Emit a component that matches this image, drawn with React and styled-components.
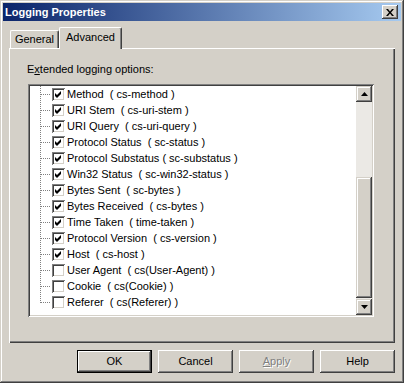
import React from 'react';
import styled, { createGlobalStyle } from 'styled-components';

const Global = createGlobalStyle`
  html, body { margin: 0; padding: 0; background: #d4d0c8; }
  body { font-family: "Liberation Sans", Arial, sans-serif; font-size: 11px; }
  * { box-sizing: border-box; }
`;

const raised = `
  box-shadow: inset -1px -1px #404040, inset 1px 1px #fff, inset -2px -2px #808080, inset 2px 2px #d4d0c8;
`;

const Window = styled.div`
  width: 404px;
  height: 383px;
  padding: 3px;
  display: flex;
  flex-direction: column;
  background: #d4d0c8;
  box-shadow: inset -1px -1px #404040, inset 1px 1px #d4d0c8, inset -2px -2px #808080, inset 2px 2px #fff;
  font-family: "Liberation Sans", Arial, sans-serif;
  font-size: 11px;
  color: #000;
`;

const TitleBar = styled.div`
  height: 18px;
  flex: none;
  display: flex;
  align-items: center;
  justify-content: space-between;
  padding: 0 3px 0 2px;
  background: linear-gradient(to right, #0a246a, #a6caf0);
`;

const Title = styled.span`
  color: #fff;
  font-weight: bold;
  font-size: 11px;
  line-height: 13px;
`;

const CloseButton = styled.div`
  width: 16px;
  height: 14px;
  background: #d4d0c8;
  display: flex;
  align-items: center;
  justify-content: center;
  box-shadow: inset -1px -1px #404040, inset 1px 1px #fff, inset -2px -2px #808080;
`;

const Body = styled.div`
  flex: 1;
  display: flex;
  flex-direction: column;
  padding: 6px 6px 7px 6px;
`;

const TabStrip = styled.div`
  height: 21px;
  display: flex;
  align-items: flex-end;
  padding-left: 1px;
  position: relative;
  z-index: 1;
`;

const Tab = styled.div`
  width: ${p => (p.$active ? 63 : 49)}px;
  height: ${p => (p.$active ? 22 : 18)}px;
  margin-bottom: ${p => (p.$active ? -1 : 0)}px;
  background: #d4d0c8;
  border-top: 1px solid #fff;
  border-left: 1px solid #fff;
  border-right: 1px solid #404040;
  border-radius: 2px 2px 0 0;
  box-shadow: inset -1px 0 #808080;
  display: flex;
  align-items: ${p => (p.$active ? 'flex-start' : 'center')};
  padding-top: ${p => (p.$active ? 3 : 0)}px;
  justify-content: center;
  line-height: 13px;
`;

const Panel = styled.div`
  height: 295px;
  flex: none;
  padding: 15px 0 0 18px;
  box-shadow: inset 1px 1px #fff, inset -1px -1px #404040, inset -2px -2px #808080;
`;

const Label = styled.div`
  line-height: 13px;
  height: 13px;
`;

const Underline = styled.span`
  text-decoration: underline;
`;

const ListBox = styled.div`
  margin: 8px 0 0 1px;
  width: 346px;
  height: 233px;
  padding: 2px;
  display: flex;
  background: #fff;
  box-shadow: inset 1px 1px #808080, inset -1px -1px #fff, inset 2px 2px #404040, inset -2px -2px #d4d0c8;
`;

const Items = styled.div`
  flex: 1;
  display: flex;
  flex-direction: column;
  overflow: hidden;
`;

const Row = styled.div`
  height: 16px;
  flex: none;
  display: flex;
  align-items: center;
`;

const Gutter = styled.div`
  width: 22px;
  align-self: stretch;
  background-image:
    repeating-linear-gradient(to bottom, #808080 0 1px, transparent 1px 2px),
    repeating-linear-gradient(to right, #808080 0 1px, transparent 1px 2px);
  background-size: 1px ${p => (p.$last ? '9px' : '16px')}, 9px 1px;
  background-position: 10px 0, 11px 8px;
  background-repeat: no-repeat;
`;

const CheckBox = styled.div`
  width: 13px;
  height: 13px;
  flex: none;
  background: #fff;
  display: flex;
  align-items: center;
  justify-content: center;
  box-shadow: inset 1px 1px #808080, inset -1px -1px #fff, inset 2px 2px #404040, inset -2px -2px #d4d0c8;
`;

const ItemText = styled.span`
  margin-left: 2px;
  white-space: pre;
  line-height: 13px;
`;

const ScrollBar = styled.div`
  width: 16px;
  flex: none;
  display: flex;
  flex-direction: column;
`;

const ScrollButton = styled.div`
  width: 16px;
  height: 16px;
  flex: none;
  background: #d4d0c8;
  display: flex;
  align-items: center;
  justify-content: center;
  ${raised}
  box-shadow: inset -1px -1px #404040, inset 1px 1px #d4d0c8, inset -2px -2px #808080, inset 2px 2px #fff;
`;

const Track = styled.div`
  height: ${p => p.$h}px;
  flex: ${p => (p.$fill ? 1 : 'none')};
  background: #ebe9e5;
`;

const Thumb = styled.div`
  height: 121px;
  flex: none;
  background: #d4d0c8;
  box-shadow: inset -1px -1px #404040, inset 1px 1px #d4d0c8, inset -2px -2px #808080, inset 2px 2px #fff;
`;

const Footer = styled.div`
  margin-top: 7px;
  display: flex;
  justify-content: flex-end;
  gap: 6px;
`;

const Button = styled.div`
  width: 75px;
  height: 23px;
  display: flex;
  align-items: center;
  justify-content: center;
  line-height: 13px;
  background: #d4d0c8;
  color: ${p => (p.$disabled ? '#808080' : '#000')};
  text-shadow: ${p => (p.$disabled ? '1px 1px #fff' : 'none')};
  box-shadow: ${p =>
    p.$default
      ? 'inset 0 0 0 1px #000, inset -2px -2px #404040, inset 2px 2px #fff, inset -3px -3px #808080'
      : 'inset -1px -1px #404040, inset 1px 1px #fff, inset -2px -2px #808080'};
`;

const Check = () => (
  <svg width="7" height="7" viewBox="0 0 7 7">
    <path d="M0 2 L2 4 L6 0 L6 3 L2 7 L0 5 Z" fill="#000" />
  </svg>
);

const ArrowUp = () => (
  <svg width="7" height="4" viewBox="0 0 7 4">
    <path d="M3.5 0 L7 4 L0 4 Z" fill="#000" />
  </svg>
);

const ArrowDown = () => (
  <svg width="7" height="4" viewBox="0 0 7 4">
    <path d="M0 0 L7 0 L3.5 4 Z" fill="#000" />
  </svg>
);

const CloseX = () => (
  <svg width="8" height="7" viewBox="0 0 8 7">
    <path d="M0 0 H2 L4 2.5 L6 0 H8 L5 3.5 L8 7 H6 L4 4.5 L2 7 H0 L3 3.5 Z" fill="#000" />
  </svg>
);

const items = [
  ['Method  ( cs-method )', true],
  ['URI Stem  ( cs-uri-stem )', true],
  ['URI Query  ( cs-uri-query )', true],
  ['Protocol Status  ( sc-status )', true],
  ['Protocol Substatus ( sc-substatus )', true],
  ['Win32 Status  ( sc-win32-status )', true],
  ['Bytes Sent  ( sc-bytes )', true],
  ['Bytes Received  ( cs-bytes )', true],
  ['Time Taken  ( time-taken )', true],
  ['Protocol Version  ( cs-version )', true],
  ['Host  ( cs-host )', true],
  ['User Agent  ( cs(User-Agent) )', false],
  ['Cookie  ( cs(Cookie) )', false],
  ['Referer  ( cs(Referer) )', false],
];

export default function App() {
  return (
    <>
      <Global />
      <Window>
        <TitleBar>
          <Title>Logging Properties</Title>
          <CloseButton>
            <CloseX />
          </CloseButton>
        </TitleBar>
        <Body>
          <TabStrip>
            <Tab>General</Tab>
            <Tab $active>Advanced</Tab>
          </TabStrip>
          <Panel>
            <Label>
              E<Underline>x</Underline>tended logging options:
            </Label>
            <ListBox>
              <Items>
                {items.map(([text, checked], i) => (
                  <Row key={text}>
                    <Gutter $last={i === items.length - 1} />
                    <CheckBox>{checked && <Check />}</CheckBox>
                    <ItemText>{text}</ItemText>
                  </Row>
                ))}
              </Items>
              <ScrollBar>
                <ScrollButton>
                  <ArrowUp />
                </ScrollButton>
                <Track $h={75} />
                <Thumb />
                <Track $fill />
                <ScrollButton>
                  <ArrowDown />
                </ScrollButton>
              </ScrollBar>
            </ListBox>
          </Panel>
          <Footer>
            <Button $default>OK</Button>
            <Button>Cancel</Button>
            <Button $disabled>
              <span>
                <Underline>A</Underline>pply
              </span>
            </Button>
            <Button>Help</Button>
          </Footer>
        </Body>
      </Window>
    </>
  );
}
